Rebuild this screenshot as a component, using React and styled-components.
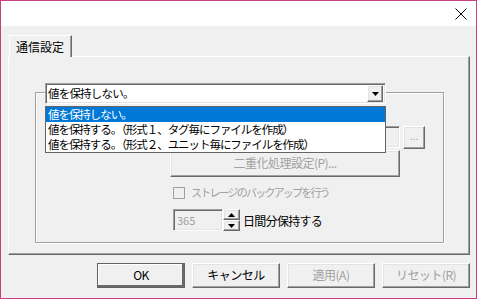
import React from "react";
import styled, { createGlobalStyle, css } from "styled-components";

const GlobalStyle = createGlobalStyle`
  body {
    margin: 0;
    font-family: "Noto Sans CJK JP", "Noto Sans", sans-serif;
    font-size: 12px;
    font-weight: 400;
    color: #000;
  }
`;

const OPTIONS = [
  "値を保持しない。",
  "値を保持する。（形式１、タグ毎にファイルを作成）",
  "値を保持する。（形式２、ユニット毎にファイルを作成）",
];

const App = () => {
  return (
    <>
      <GlobalStyle />
      <Window>
        <TitleBar>
          <CloseIcon width="12" height="12" viewBox="0 0 12 12">
            <path d="M0.5 0.5 L11.5 11.5 M11.5 0.5 L0.5 11.5" stroke="#000" strokeWidth="1" />
          </CloseIcon>
        </TitleBar>
        <Body>
          <TabRow>
            <Tab>通信設定</Tab>
          </TabRow>
          <Panel>
            <GroupArea>
              <ComboWrap>
                <Combo>
                  <ComboText>{OPTIONS[0]}</ComboText>
                  <ComboButton>
                    <svg width="7" height="4" viewBox="0 0 7 4">
                      <path d="M0 0 H7 L3.5 4 Z" fill="#000" />
                    </svg>
                  </ComboButton>
                </Combo>
                <DropList>
                  {OPTIONS.map((opt, i) => (
                    <DropItem key={opt} $selected={i === 0}>
                      {opt}
                    </DropItem>
                  ))}
                </DropList>
              </ComboWrap>
              <Group>
                <FieldRow>
                  <TextField />
                  <SmallButton>...</SmallButton>
                </FieldRow>
                <WideButton>二重化処理設定(P)...</WideButton>
                <CheckRow>
                  <CheckBox />
                  <DisabledLabel>ストレージのバックアップを行う</DisabledLabel>
                </CheckRow>
                <SpinRow>
                  <SpinField>365</SpinField>
                  <SpinButtons>
                    <SpinButton>
                      <svg width="7" height="4" viewBox="0 0 7 4">
                        <path d="M3.5 0 L7 4 H0 Z" fill="#000" />
                      </svg>
                    </SpinButton>
                    <SpinButton>
                      <svg width="7" height="4" viewBox="0 0 7 4">
                        <path d="M0 0 H7 L3.5 4 Z" fill="#000" />
                      </svg>
                    </SpinButton>
                  </SpinButtons>
                  <SpinLabel>日間分保持する</SpinLabel>
                </SpinRow>
              </Group>
            </GroupArea>
          </Panel>
          <Footer>
            <DialogButton $default>OK</DialogButton>
            <DialogButton>キャンセル</DialogButton>
            <DialogButton $disabled>適用(A)</DialogButton>
            <DialogButton $disabled>リセット(R)</DialogButton>
          </Footer>
        </Body>
      </Window>
    </>
  );
};

const raised = css`
  border-style: solid;
  border-width: 1px;
  border-color: #fff #696969 #696969 #fff;
  box-shadow: inset -1px -1px 0 #a0a0a0, inset 1px 1px 0 #e3e3e3;
  background: #f0f0f0;
`;

const sunken = css`
  border-style: solid;
  border-width: 1px;
  border-color: #a0a0a0 #fff #fff #a0a0a0;
  box-shadow: inset 1px 1px 0 #696969, inset -1px -1px 0 #e3e3e3;
`;

const Window = styled.div`
  width: 477px;
  height: 299px;
  box-sizing: border-box;
  border: 1px solid #c93f7f;
  background: #f0f0f0;
  display: flex;
  flex-direction: column;
  overflow: hidden;
`;

const TitleBar = styled.div`
  height: 25px;
  background: #fff;
  display: flex;
  align-items: center;
  justify-content: flex-end;
  padding-right: 9px;
`;

const CloseIcon = styled.svg`
  display: block;
`;

const Body = styled.div`
  flex: 1;
  padding: 9px 6px 0 7px;
  display: flex;
  flex-direction: column;
`;

const TabRow = styled.div`
  display: flex;
  padding-left: 1px;
  position: relative;
  z-index: 1;
`;

const Tab = styled.div`
  width: 63px;
  height: 22px;
  box-sizing: border-box;
  border-style: solid;
  border-width: 1px 1px 0 1px;
  border-color: #fff #696969 transparent #fff;
  box-shadow: inset -1px 0 0 #a0a0a0;
  background: #f0f0f0;
  padding: 3px 0 0 6px;
  line-height: 16px;
  margin-bottom: -1px;
`;

const Panel = styled.div`
  height: 199px;
  box-sizing: border-box;
  border-style: solid;
  border-width: 1px;
  border-color: #fff #696969 #696969 #fff;
  box-shadow: inset -1px -1px 0 #a0a0a0;
  padding: 26px 25px 0 26px;
`;

const GroupArea = styled.div`
  position: relative;
`;

const ComboWrap = styled.div`
  position: relative;
  z-index: 2;
  margin-left: 10px;
  width: 341px;
`;

const Combo = styled.div`
  height: 21px;
  box-sizing: border-box;
  ${sunken};
  background: #fff;
  display: flex;
  align-items: center;
  padding: 0 2px 0 2px;
`;

const ComboText = styled.div`
  flex: 1;
  font-size: 11.5px;
  letter-spacing: -0.8px;
  line-height: 15px;
`;

const ComboButton = styled.div`
  width: 16px;
  height: 17px;
  box-sizing: border-box;
  ${raised};
  display: flex;
  align-items: center;
  justify-content: center;
`;

const DropList = styled.div`
  position: absolute;
  top: 23px;
  left: 0;
  width: 341px;
  box-sizing: border-box;
  background: #fff;
  border: 1px solid #646464;
`;

const DropItem = styled.div`
  height: 15px;
  line-height: 15px;
  padding-left: 2px;
  font-size: 11.5px;
  letter-spacing: -1.05px;
  white-space: nowrap;
  background: ${(p) => (p.$selected ? "#0078d7" : "#fff")};
  color: ${(p) => (p.$selected ? "#fff" : "#000")};
`;

const Group = styled.div`
  margin-top: -12px;
  height: 151px;
  box-sizing: border-box;
  border: 1px solid #a0a0a0;
  box-shadow: inset 1px 1px 0 #fff, 1px 1px 0 #fff;
  padding: 33px 0 0 134px;
  display: flex;
  flex-direction: column;
  align-items: flex-start;
`;

const FieldRow = styled.div`
  display: flex;
  gap: 3px;
  align-items: flex-start;
`;

const TextField = styled.div`
  width: 230px;
  height: 22px;
  box-sizing: border-box;
  ${sunken};
  background: #f0f0f0;
`;

const SmallButton = styled.div`
  width: 22px;
  height: 23px;
  box-sizing: border-box;
  ${raised};
  color: #a0a0a0;
  font-size: 10px;
  text-align: center;
  line-height: 18px;
`;

const WideButton = styled.div`
  margin-top: 1px;
  width: 230px;
  height: 27px;
  box-sizing: border-box;
  ${raised};
  color: #a0a0a0;
  text-align: center;
  line-height: 24px;
  letter-spacing: -0.5px;
`;

const CheckRow = styled.div`
  margin-top: 8px;
  display: flex;
  align-items: center;
  gap: 6px;
  padding-left: 3px;
`;

const CheckBox = styled.div`
  width: 12px;
  height: 12px;
  box-sizing: border-box;
  border: 1px solid #a0a0a0;
  background: #f0f0f0;
`;

const DisabledLabel = styled.span`
  color: #a0a0a0;
  font-size: 11px;
  letter-spacing: -1.8px;
  line-height: 15px;
`;

const SpinRow = styled.div`
  margin-top: 9px;
  display: flex;
  align-items: center;
  padding-left: 3px;
`;

const SpinField = styled.div`
  width: 50px;
  height: 22px;
  box-sizing: border-box;
  ${sunken};
  background: #f0f0f0;
  color: #a0a0a0;
  font-size: 11px;
  line-height: 20px;
  padding-left: 3px;
`;

const SpinButtons = styled.div`
  display: flex;
  flex-direction: column;
  width: 17px;
  height: 22px;
`;

const SpinButton = styled.div`
  flex: 1;
  box-sizing: border-box;
  ${raised};
  display: flex;
  align-items: center;
  justify-content: center;
`;

const SpinLabel = styled.span`
  margin-left: 3px;
  font-size: 12px;
  letter-spacing: -0.7px;
`;

const Footer = styled.div`
  margin-top: 8px;
  display: flex;
  justify-content: flex-end;
  gap: 7px;
`;

const DialogButton = styled.div`
  width: 88px;
  height: 25px;
  box-sizing: border-box;
  ${raised};
  text-align: center;
  line-height: 22px;
  letter-spacing: -0.5px;
  color: ${(p) => (p.$disabled ? "#a0a0a0" : "#000")};
  ${(p) =>
    p.$default &&
    css`
      border: 1px solid #646464;
      box-shadow: inset -2px -2px 0 #696969, inset 1px 1px 0 #fff;
    `}
`;

export default App;
